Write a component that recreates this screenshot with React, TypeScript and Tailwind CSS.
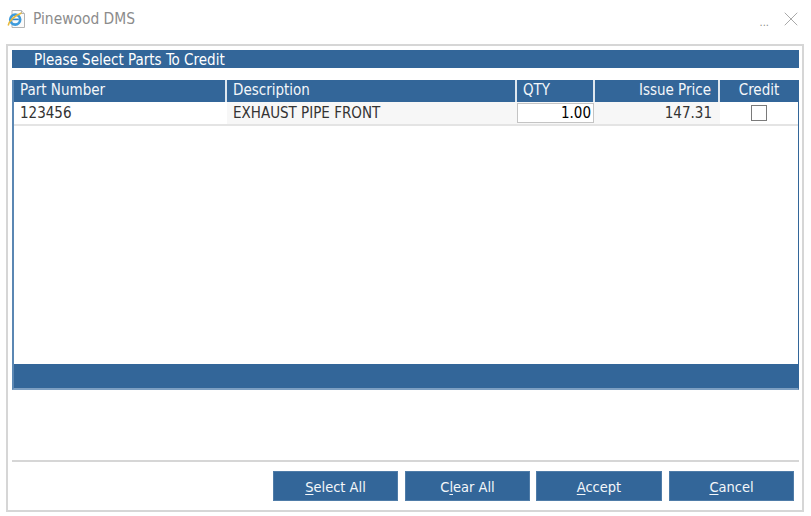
import { X } from "lucide-react";

const headerCell = "h-full flex items-center border-r-2 border-[#dfe7ef] pb-[1px]";

const FormButton = ({ hot, rest, pre = "", width }: { hot: string; rest: string; pre?: string; width: string }) => (
  <button type="button" className={`${width} h-[30px] pt-[3px] bg-[#336699] border border-[#4f7ca8] text-[#f4f7fa] text-[14.5px] leading-none`}>
    {pre}
    <span className="underline underline-offset-2">{hot}</span>
    {rest}
  </button>
);

const IeIcon = () => (
  <svg width="20" height="20" viewBox="0 0 20 20" className="shrink-0">
    <path d="M5 1.5h9.5l3 3v14H5z" fill="#fbfbfb" stroke="#b4b4b4" strokeWidth="1" />
    <path d="M14.5 1.5v3h3" fill="#e6e6e6" stroke="#b4b4b4" strokeWidth="1" />
    <circle cx="8.2" cy="10.6" r="5" fill="none" stroke="#3d9bdc" strokeWidth="2.6" />
    <path d="M4.6 10.4h7.2" stroke="#2f86cc" strokeWidth="1.6" />
    <path d="M1.2 16.5C2 12.5 6.5 7 14.5 4" fill="none" stroke="#e8b93a" strokeWidth="1.5" />
  </svg>
);

export default function App() {
  return (
    <div className="w-[811px] h-[516px] bg-white flex flex-col font-['DejaVu_Sans_Condensed','DejaVu_Sans',sans-serif] text-[15px] overflow-hidden">
      {/* title bar */}
      <div className="h-[44px] shrink-0 flex items-center pl-[7px] pr-[8px] pb-[6px]">
        <IeIcon />
        <span className="ml-[6px] text-[#8c8c8c] text-[15.4px] pt-[2px]">Pinewood DMS</span>
        <span className="ml-auto text-[#8c8c8c] text-[11px] leading-none mt-[6px]">...</span>
        <X className="ml-[10px] text-[#8c8c8c]" size={24} strokeWidth={0.75} />
      </div>

      {/* dialog */}
      <div className="ml-[6px] mr-[7px] mb-[4px] flex-1 border-2 border-[#d6d6d6] pt-[4px] pl-[4px] pr-[3px] flex flex-col">
        <div className="h-[18px] bg-[#336699] text-white pl-[22px] pt-[2px] flex items-center leading-none">
          Please Select Parts To Credit
        </div>

        <div className="mt-[12px] h-[310px] border-l-2 border-r border-b-2 border-[#336699] border-b-[#7d9fc2] border-l-[#5b87b3] flex flex-col">
          <div className="h-[22px] shrink-0 bg-[#336699] text-[#f4f7fa] flex">
            <div className={`${headerCell} w-[213px] pl-[6px]`}>Part Number</div>
            <div className={`${headerCell} w-[290px] pl-[6px]`}>Description</div>
            <div className={`${headerCell} w-[78px] pl-[6px]`}>QTY</div>
            <div className={`${headerCell} w-[125px] justify-end pr-[7px]`}>Issue Price</div>
            <div className="h-full flex-1 flex items-center justify-center pb-[1px]">Credit</div>
          </div>

          <div className="h-[24px] shrink-0 flex items-center border-b-2 border-[#e4e4e4] text-[#333333]">
            <div className="w-[213px] h-full pl-[6px] flex items-center pt-[1px]">123456</div>
            <div className="w-[290px] h-full pl-[6px] flex items-center pt-[1px] bg-[#f7f7f7]">EXHAUST PIPE FRONT</div>
            <div className="w-[78px] h-full flex items-center bg-[#f7f7f7]">
              <div className="w-[77px] h-[20px] border border-[#c4c4c4] bg-white text-right pr-[2px] leading-[18px] text-black">1.00</div>
            </div>
            <div className="w-[125px] h-full flex items-center justify-end pr-[8px] pt-[1px] bg-[#f7f7f7]">147.31</div>
            <div className="flex-1 h-full flex items-center justify-center">
              <div className="w-[16px] h-[16px] border border-[#7a7a7a] bg-white" />
            </div>
          </div>

          <div className="flex-1 bg-white" />
          <div className="h-[24px] shrink-0 bg-[#336699]" />
        </div>

        <div className="mt-[70px] border-t-2 border-[#d6d6d6] pt-[9px] flex justify-end pr-[5px]">
          <div className="flex gap-[7px]">
            <FormButton width="w-[125px]" hot="S" rest="elect All" />
            <FormButton width="w-[125px]" pre="C" hot="l" rest="ear All" />
          </div>
          <div className="flex gap-[7px] ml-[6px]">
            <FormButton width="w-[126px]" hot="A" rest="ccept" />
            <FormButton width="w-[125px]" hot="C" rest="ancel" />
          </div>
        </div>
      </div>
    </div>
  );
}
